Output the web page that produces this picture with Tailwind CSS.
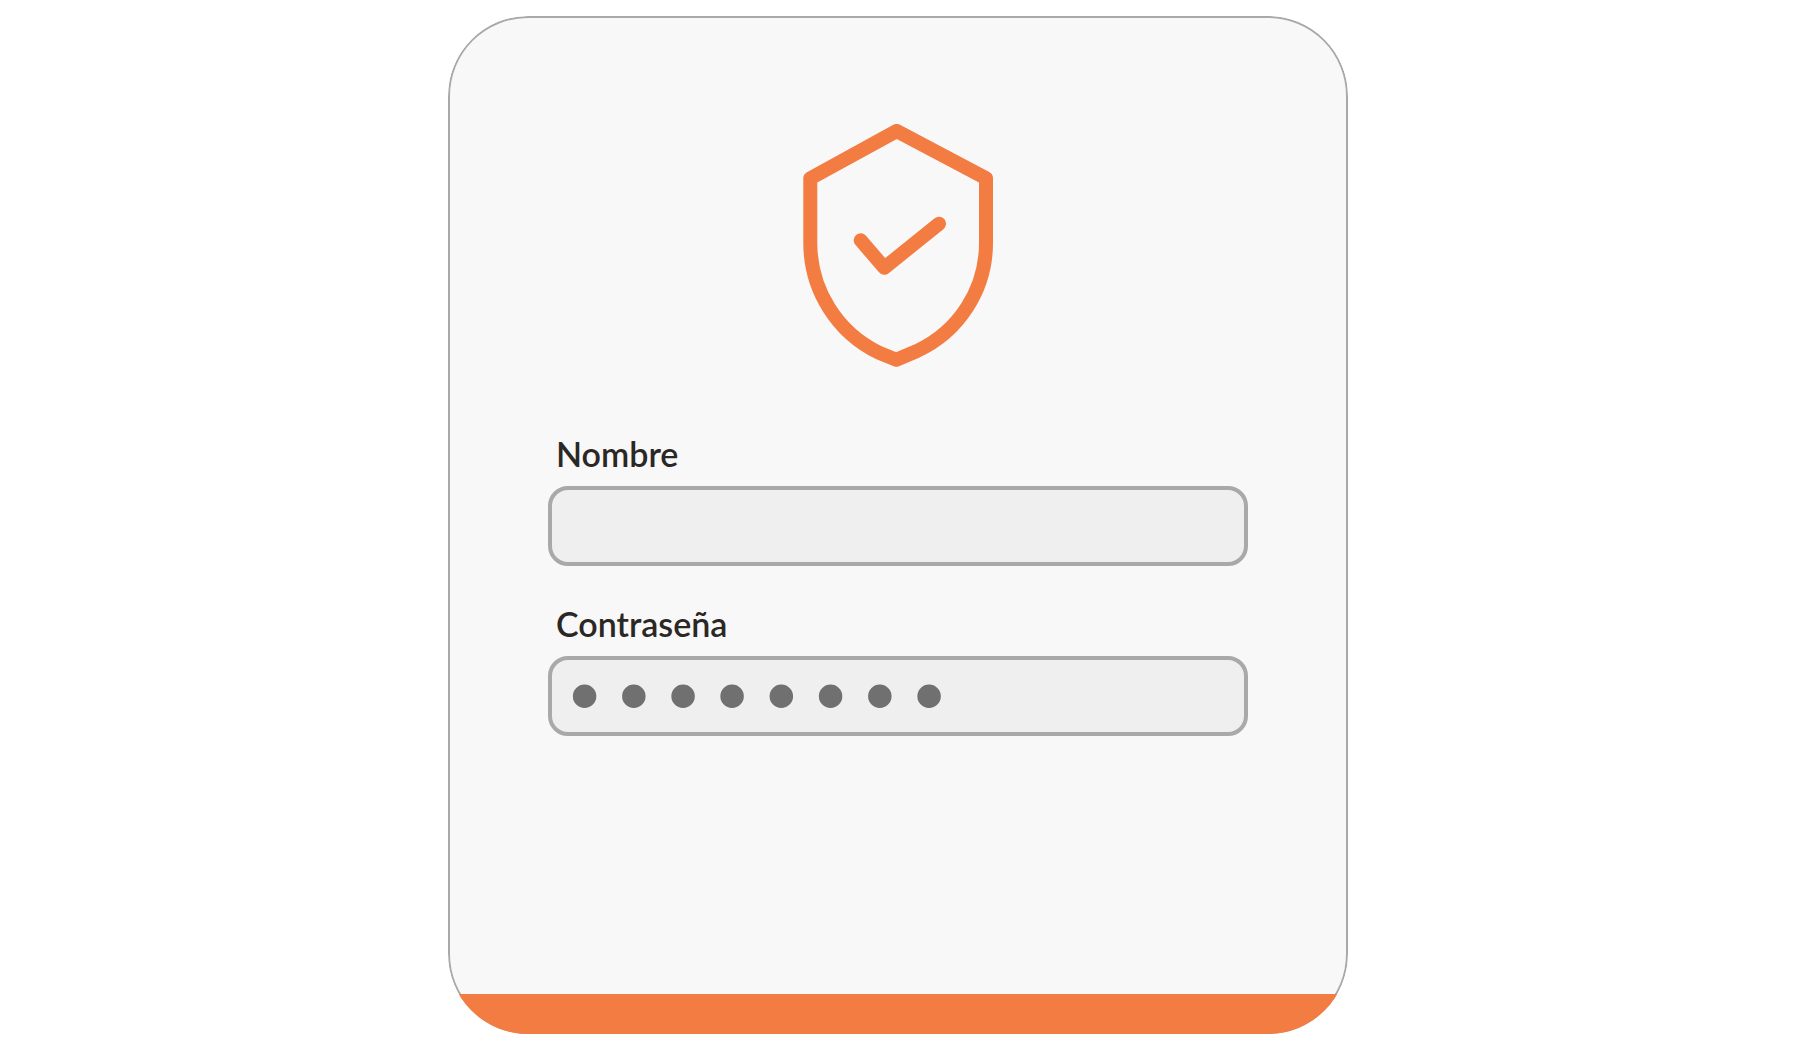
<!DOCTYPE html>
<html lang="es">

<head>
  <meta charset="UTF-8">
  <meta name="viewport" content="width=device-width, initial-scale=1.0">
  <title>Acceso</title>
  <script src="https://cdn.jsdelivr.net/npm/@tailwindcss/browser@4"></script>
</head>

<body class="flex min-h-screen flex-col bg-white px-4 pt-4 pb-[14px] font-['Lato','Liberation_Sans',sans-serif] text-[#2b2725]">
  <main class="relative mx-auto flex w-full max-w-[900px] grow overflow-hidden rounded-[80px]">
    <form action="#" method="post" class="flex w-full flex-col items-center rounded-[80px] border-2 border-[#a9a9a9] bg-[#f8f8f8] px-[98px] pt-[106px] pb-20">
      <svg class="mb-[67px] h-[243px] w-[190px]" viewBox="23 24 190 243" fill="none" stroke="#f37c42" stroke-width="14" stroke-linecap="round" stroke-linejoin="round" aria-hidden="true">
        <path d="M116.7 31 L206 78.3 V143 A119 119 0 0 1 137 251 L116.3 259.7 L99 252.8 A122 122 0 0 1 30.3 143 V78.3 Z" />
        <path d="M80.7 140.3 L104.3 167.8 L159 123.7" />
      </svg>

      <div class="flex w-full flex-col gap-[38px]">
        <div class="flex flex-col gap-3">
          <label for="nombre" class="px-2 text-[34px] leading-10 font-semibold">Nombre</label>
          <input type="text" id="nombre" name="nombre"
            class="h-20 w-full rounded-[20px] border-4 border-[#a9a9a9] bg-[#efefef] px-5 text-[32px] outline-none">
        </div>
        <div class="flex flex-col gap-3">
          <label for="clave" class="px-2 text-[34px] leading-10 font-semibold">Contraseña</label>
          <input type="password" id="clave" name="clave" value="12345678"
            class="h-20 w-full rounded-[20px] border-4 border-[#a9a9a9] bg-[#efefef] px-2 pt-[10px] font-['Liberation_Mono',monospace] text-[82px] leading-[62px] font-bold text-[#707070] outline-none">
        </div>
      </div>
    </form>
    <!-- bottom strip, clipped by the rounded card -->
    <div class="absolute inset-x-0 bottom-0 h-10 bg-[#f37c42]"></div>
  </main>
</body>

</html>
